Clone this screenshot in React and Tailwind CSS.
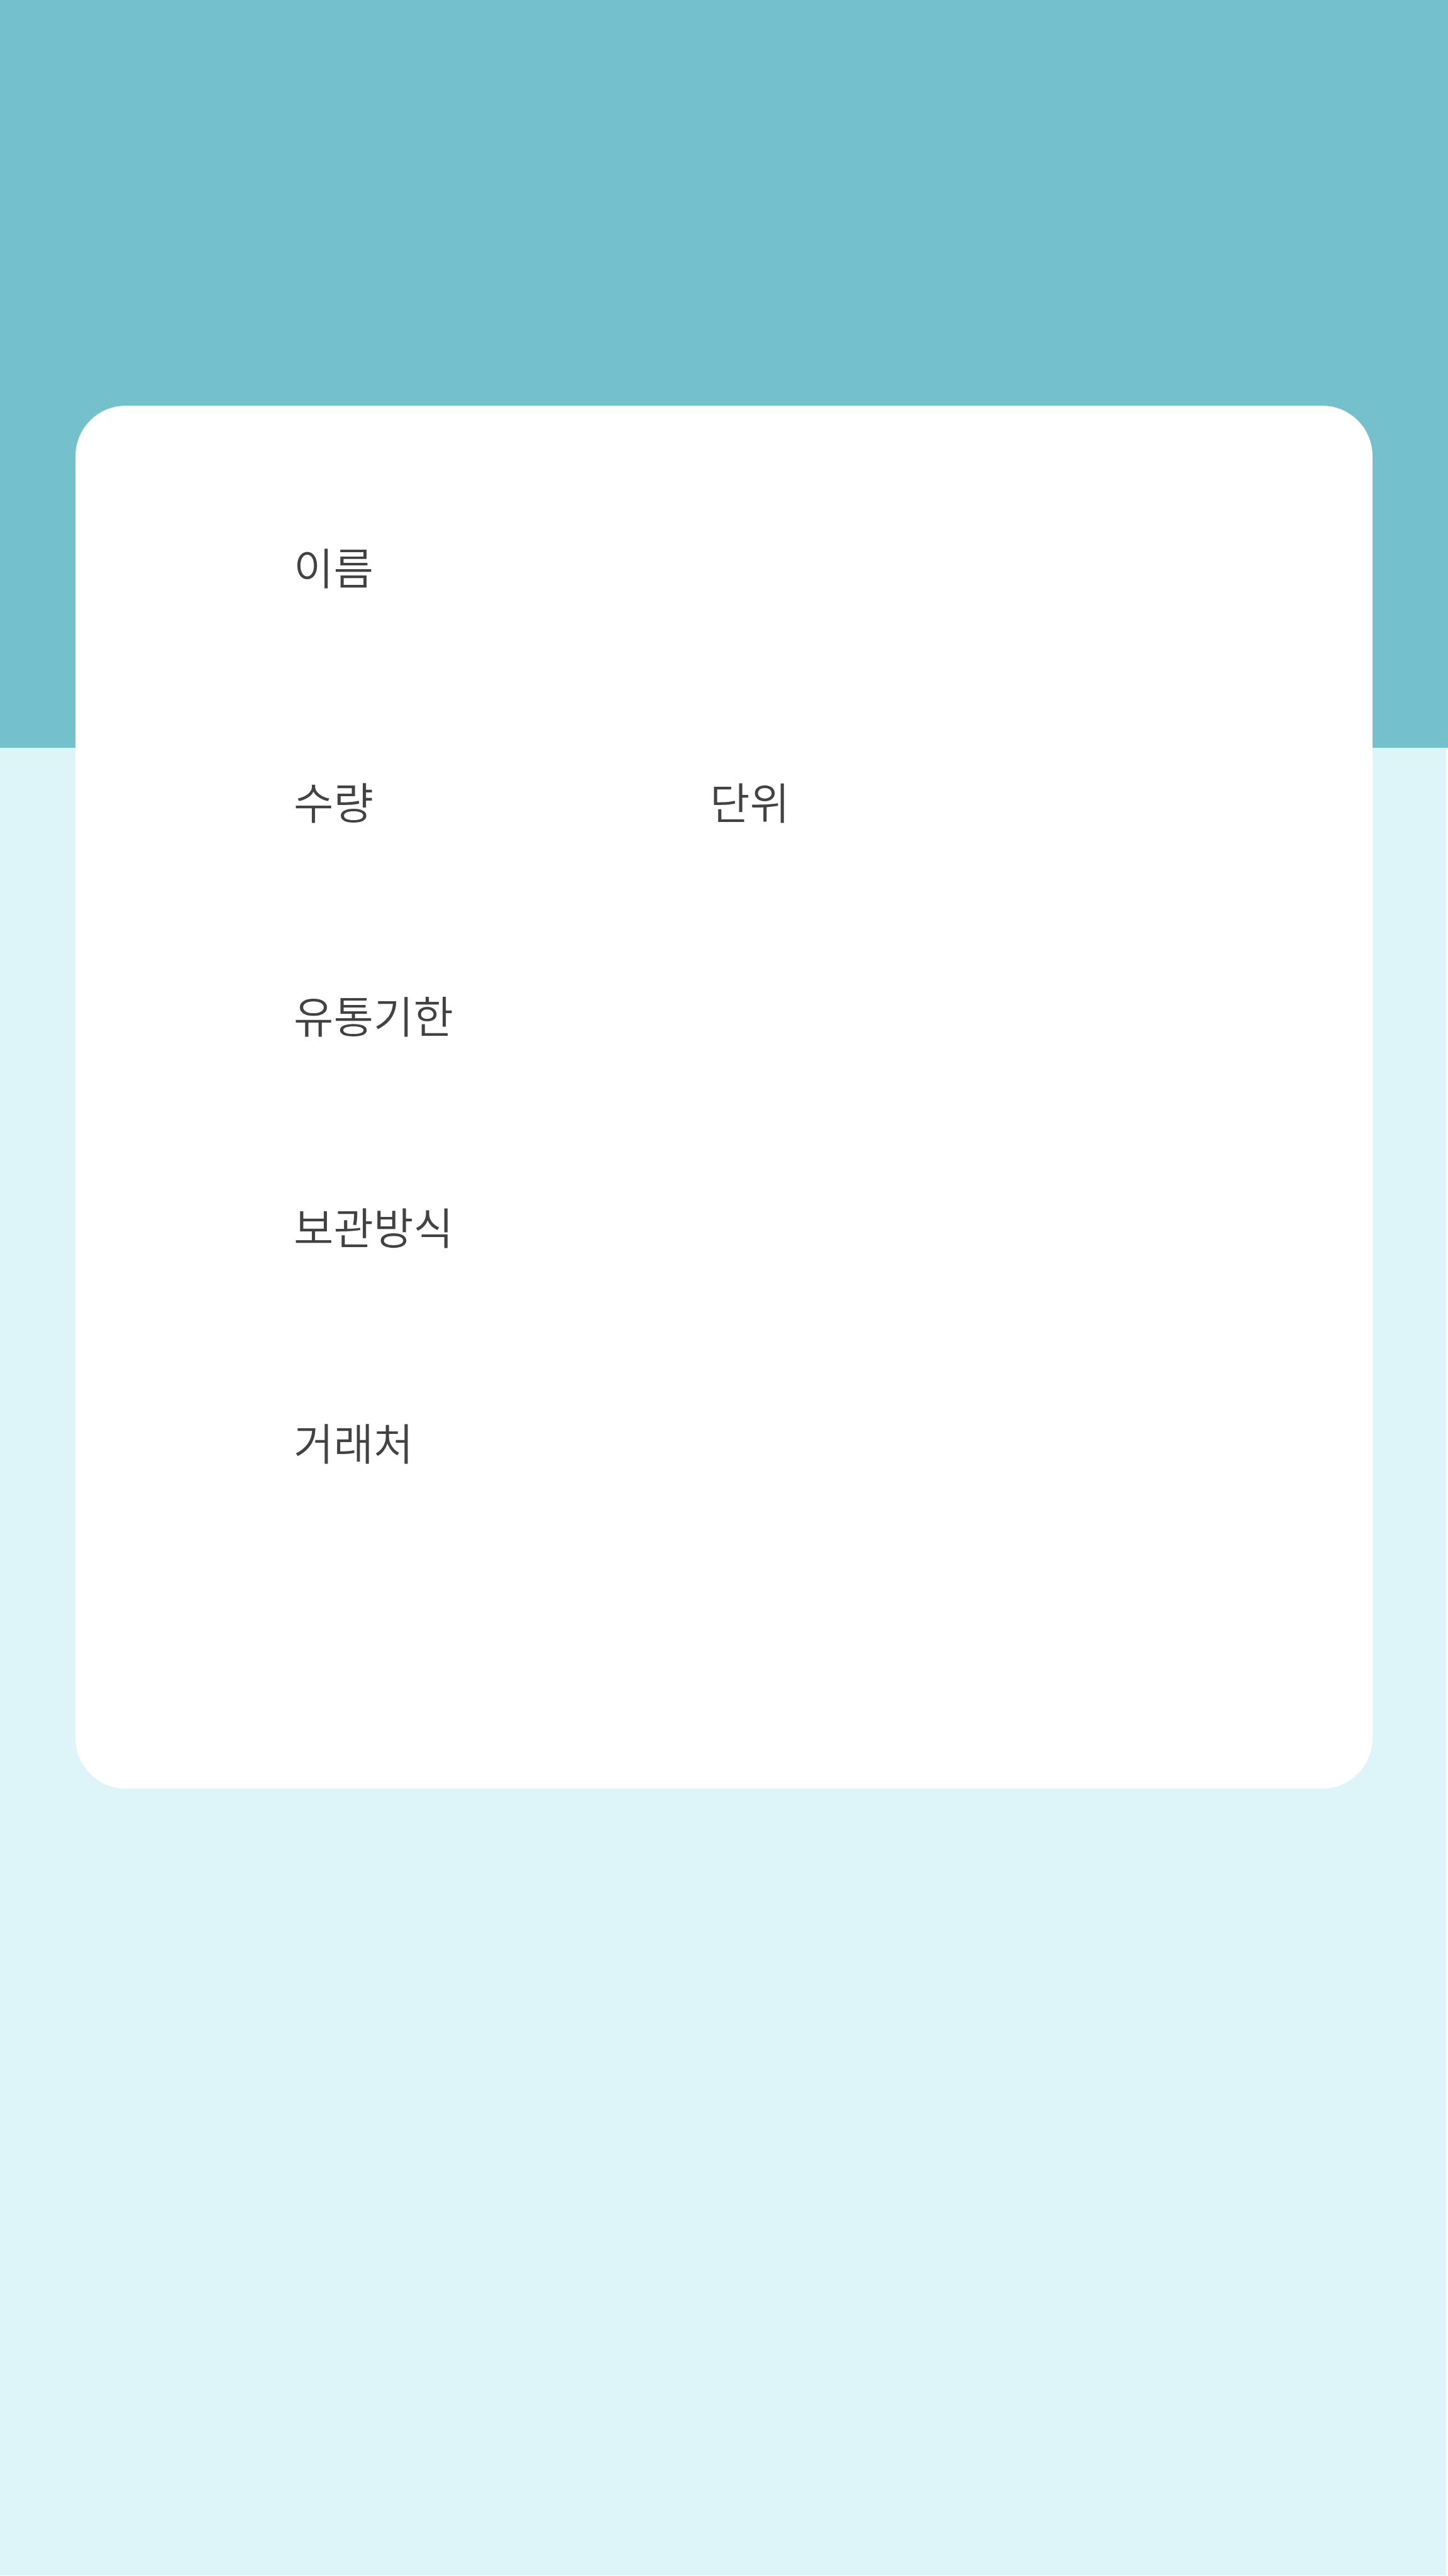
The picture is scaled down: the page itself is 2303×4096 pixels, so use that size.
function Label({ children }) {
  return <p className="w-[662px] whitespace-nowrap">{children}</p>;
}

export default function App() {
  return (
    <div className="flex min-h-screen flex-col bg-white font-['Noto_Sans_CJK_KR','Noto_Sans_CJK_SC',sans-serif]">
      <header className="h-[1189px] bg-[#75c0cd]" />
      <main className="mr-[3px] mb-px flex flex-1 flex-col bg-[#ddf5f9]">
        <section className="-mt-[544px] mr-[117px] ml-[120px] flex flex-col rounded-[80px] bg-white pt-[205px] pb-[502px] pl-[347px] text-[69px] leading-[100px] font-[350] text-[#424242]">
          <div className="flex pb-[273px]">
            <Label>이름</Label>
          </div>
          <div className="flex pb-[240px]">
            <Label>수량</Label>
            <Label>단위</Label>
          </div>
          <div className="flex pb-[236px]">
            <Label>유통기한</Label>
          </div>
          <div className="flex pb-[243px]">
            <Label>보관방식</Label>
          </div>
          <div className="flex">
            <Label>거래처</Label>
          </div>
        </section>
      </main>
    </div>
  );
}
